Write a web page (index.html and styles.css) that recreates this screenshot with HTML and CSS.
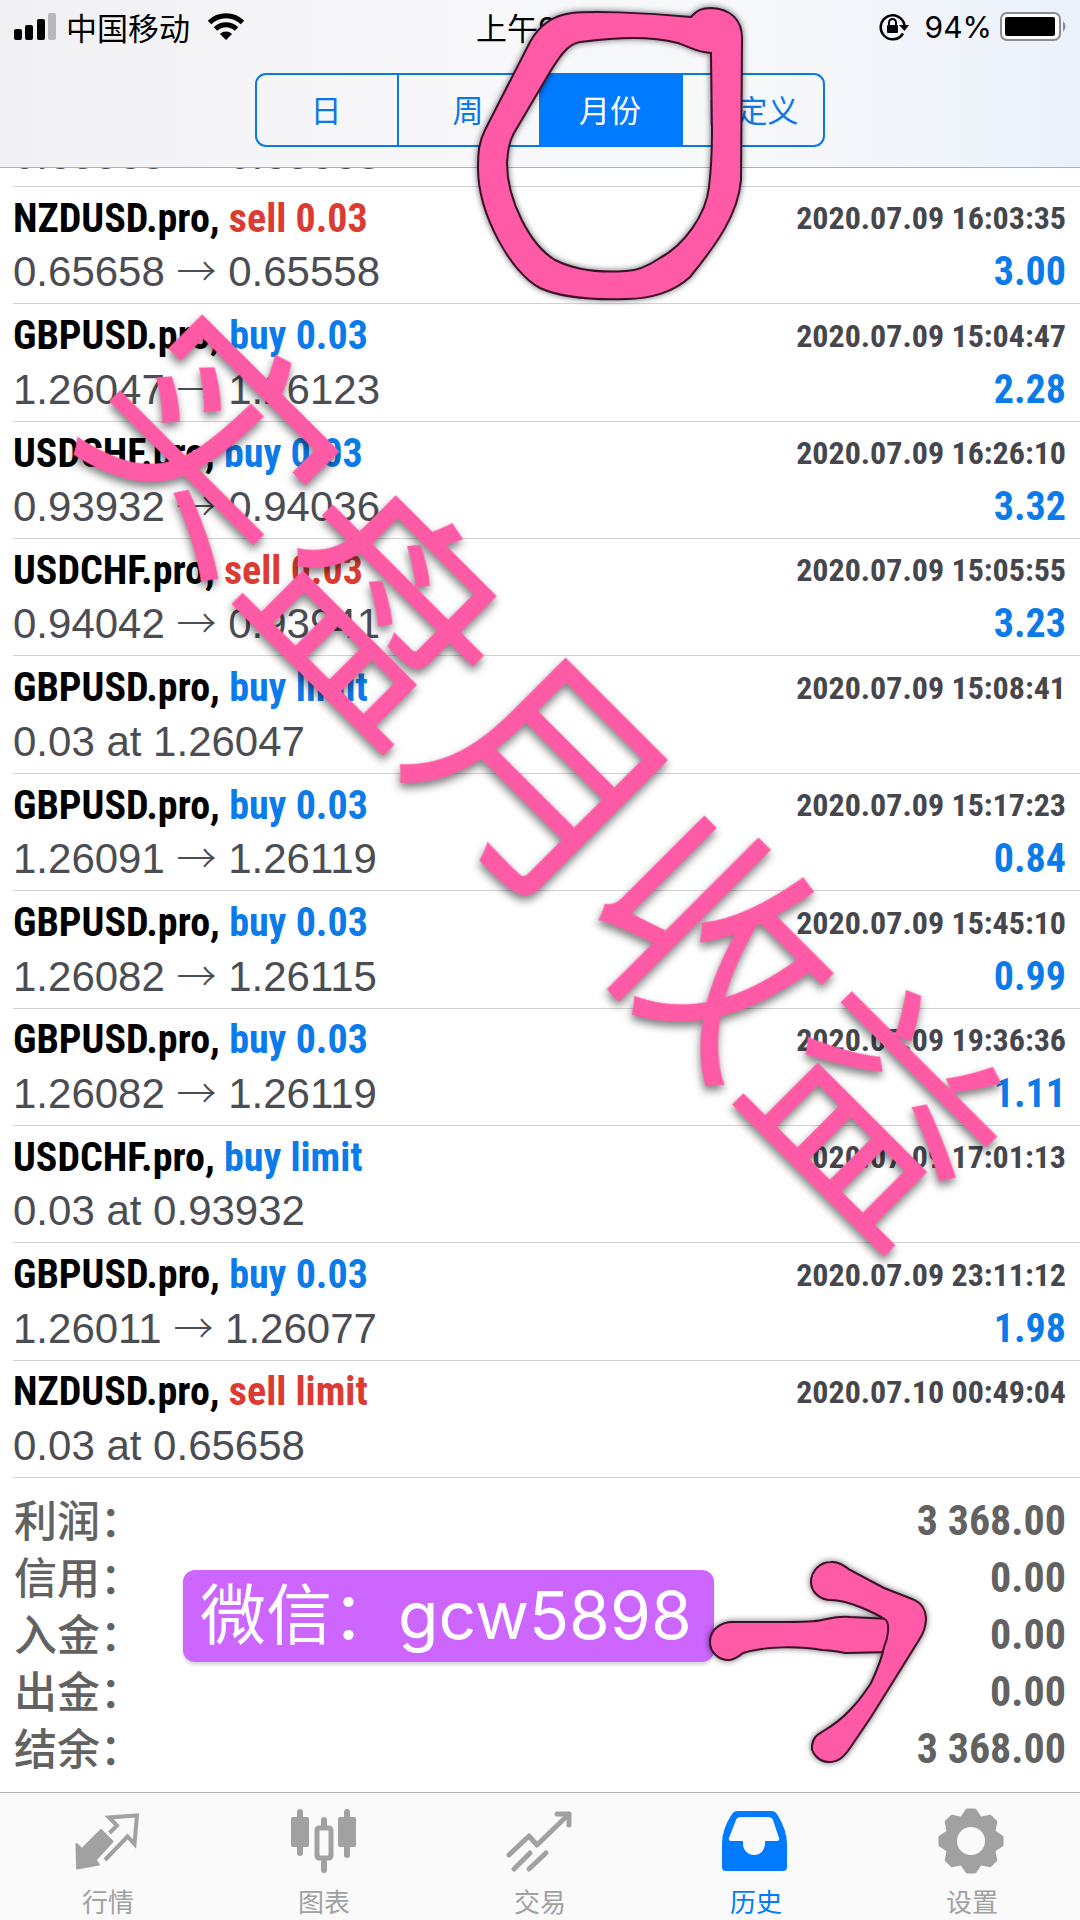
FILE: index.html
```
<!DOCTYPE html>
<html lang="zh-CN">
<head>
    <meta charset="utf-8">
    <meta name="viewport" content="width=device-width, initial-scale=1">
    <title>历史</title>
    <link rel="stylesheet" href="styles.css">
</head>
<body>
    <div class="app">
        <header class="header">
            <div class="status-bar">
                <div class="status-left">
                    <svg class="signal" width="42" height="28" viewBox="0 0 42 28">
                        <rect x="0" y="16" width="8" height="11" rx="2"/>
                        <rect x="11" y="12" width="8" height="15" rx="2"/>
                        <rect x="23" y="6" width="8" height="21" rx="2"/>
                        <rect x="34" y="0" width="8" height="27" rx="2" fill="#b9b9bb"/>
                    </svg>
                    <span>中国移动</span>
                    <svg class="wifi" width="36" height="27" viewBox="0 0 36 27">
                        <path d="M1.500 9.500a23.500 23.500 0 0 1 33 0M7.500 16a15 15 0 0 1 21 0" fill="none" stroke="#000" stroke-width="5"/>
                        <path d="M18 27l-6-6a8.500 8.500 0 0 1 12 0z"/>
                    </svg>
                </div>
                <div class="status-time">上午9:53</div>
                <div class="status-right">
                    <svg width="30" height="28" viewBox="0 0 30 28">
                        <path d="M24 20.500A12 12 0 1 1 25.500 12" fill="none" stroke="#000" stroke-width="2.500"/>
                        <path d="M20 12h10l-4.500 6z"/>
                        <rect x="8" y="12" width="11" height="8" rx="1"/>
                        <path d="M10 13V9.500a3.500 3.500 0 0 1 7 0V13" fill="none" stroke="#000" stroke-width="2"/>
                    </svg>
                    <span class="percent">94%</span>
                    <svg width="66" height="30" viewBox="0 0 66 30">
                        <rect x="1" y="1" width="59" height="27" rx="6" fill="#fff" stroke="#8c8c90" stroke-width="2"/>
                        <rect x="5" y="5" width="50" height="19" rx="2"/>
                        <path d="M63 9q5 5.500 0 11z" fill="#8c8c90"/>
                    </svg>
                </div>
            </div>
            <div class="segments">
                <button type="button">日</button>
                <button type="button">周</button>
                <button type="button" class="active">月份</button>
                <button type="button">自定义</button>
            </div>
        </header>

        <main class="history">
            <div class="deal clipped">
                <div class="prices"><span>0.65568 <i>→</i> 0.65668</span><b>3.00</b></div>
            </div>
            <div class="deal">
                <div class="title"><span>NZDUSD.pro, <em class="sell">sell 0.03</em></span><time>2020.07.09 16:03:35</time></div>
                <div class="prices"><span>0.65658 <i>→</i> 0.65558</span><b>3.00</b></div>
            </div>
            <div class="deal">
                <div class="title"><span>GBPUSD.pro, <em>buy 0.03</em></span><time>2020.07.09 15:04:47</time></div>
                <div class="prices"><span>1.26047 <i>→</i> 1.26123</span><b>2.28</b></div>
            </div>
            <div class="deal">
                <div class="title"><span>USDCHF.pro, <em>buy 0.03</em></span><time>2020.07.09 16:26:10</time></div>
                <div class="prices"><span>0.93932 <i>→</i> 0.94036</span><b>3.32</b></div>
            </div>
            <div class="deal">
                <div class="title"><span>USDCHF.pro, <em class="sell">sell 0.03</em></span><time>2020.07.09 15:05:55</time></div>
                <div class="prices"><span>0.94042 <i>→</i> 0.93941</span><b>3.23</b></div>
            </div>
            <div class="deal">
                <div class="title"><span>GBPUSD.pro, <em>buy limit</em></span><time>2020.07.09 15:08:41</time></div>
                <div class="prices"><span>0.03 at 1.26047</span></div>
            </div>
            <div class="deal">
                <div class="title"><span>GBPUSD.pro, <em>buy 0.03</em></span><time>2020.07.09 15:17:23</time></div>
                <div class="prices"><span>1.26091 <i>→</i> 1.26119</span><b>0.84</b></div>
            </div>
            <div class="deal">
                <div class="title"><span>GBPUSD.pro, <em>buy 0.03</em></span><time>2020.07.09 15:45:10</time></div>
                <div class="prices"><span>1.26082 <i>→</i> 1.26115</span><b>0.99</b></div>
            </div>
            <div class="deal">
                <div class="title"><span>GBPUSD.pro, <em>buy 0.03</em></span><time>2020.07.09 19:36:36</time></div>
                <div class="prices"><span>1.26082 <i>→</i> 1.26119</span><b>1.11</b></div>
            </div>
            <div class="deal">
                <div class="title"><span>USDCHF.pro, <em>buy limit</em></span><time>2020.07.09 17:01:13</time></div>
                <div class="prices"><span>0.03 at 0.93932</span></div>
            </div>
            <div class="deal">
                <div class="title"><span>GBPUSD.pro, <em>buy 0.03</em></span><time>2020.07.09 23:11:12</time></div>
                <div class="prices"><span>1.26011 <i>→</i> 1.26077</span><b>1.98</b></div>
            </div>
            <div class="deal">
                <div class="title"><span>NZDUSD.pro, <em class="sell">sell limit</em></span><time>2020.07.10 00:49:04</time></div>
                <div class="prices"><span>0.03 at 0.65658</span></div>
            </div>
        </main>

        <section class="summary">
            <dl>
                <div><dt>利润：</dt><dd>3 368.00</dd></div>
                <div><dt>信用：</dt><dd>0.00</dd></div>
                <div><dt>入金：</dt><dd>0.00</dd></div>
                <div><dt>出金：</dt><dd>0.00</dd></div>
                <div><dt>结余：</dt><dd>3 368.00</dd></div>
            </dl>
            <div class="contact">微信：gcw5898</div>
        </section>

        <nav class="tabs">
            <a href="#quotes">
                <svg width="72" height="72" viewBox="0 0 72 72">
                    <path d="M29 27L40.500 38.500 23.500 57 27 61.500 5 65.500 4.500 41 10 46z" stroke-width="2" stroke="currentColor" stroke-linejoin="round"/>
                    <path d="M37.500 30L45 22.500 37 14.500 65 12.500 62.500 41 55.500 33.500 33 57" fill="none" stroke="currentColor" stroke-width="4"/>
                </svg>
                <span>行情</span>
            </a>
            <a href="#chart">
                <svg width="72" height="72" viewBox="0 0 72 72">
                    <rect x="3" y="14" width="18" height="30" rx="2"/>
                    <rect x="9" y="6" width="6" height="47" rx="3"/>
                    <rect x="50" y="14" width="18" height="30" rx="2"/>
                    <rect x="56" y="6" width="6" height="49" rx="3"/>
                    <rect x="29" y="25" width="14" height="30" rx="2" fill="none" stroke="currentColor" stroke-width="5"/>
                    <rect x="33" y="14" width="6" height="12" rx="3"/>
                    <rect x="33" y="56" width="6" height="14" rx="3"/>
                </svg>
                <span>图表</span>
            </a>
            <a href="#trade">
                <svg class="lines" width="72" height="72" viewBox="0 0 72 72">
                    <path d="M5 52L25 33 33 42 65 11M53 11H65V22"/>
                    <path d="M10 66L26 50M25 66L42 50"/>
                </svg>
                <span>交易</span>
            </a>
            <a href="#history" class="active">
                <svg width="72" height="72" viewBox="0 0 72 72">
                    <path fill-rule="evenodd" d="M17 8H52Q55 8 57 11Q67 27 67 41V64Q67 68 63 68H6Q2 68 2 64V41Q2 26 12 11Q14 8 17 8zM21 14Q17 14 16 17L9 35Q8 38 11 38H23V41A11 11 0 0 0 45 41V38H57Q60 38 59 35L53 17Q52 14 48 14z"/>
                </svg>
                <span>历史</span>
            </a>
            <a href="#settings">
                <svg width="72" height="72" viewBox="0 0 72 72">
                    <defs>
                        <path id="tooth" d="M-10-22L-4-31H4L10-22z" stroke="currentColor" stroke-width="3" stroke-linejoin="round"/>
                    </defs>
                    <g transform="translate(35 38)">
                        <circle r="20" fill="none" stroke="currentColor" stroke-width="12"/>
                        <use href="#tooth"/>
                        <use href="#tooth" transform="rotate(45)"/>
                        <use href="#tooth" transform="rotate(90)"/>
                        <use href="#tooth" transform="rotate(135)"/>
                        <use href="#tooth" transform="rotate(180)"/>
                        <use href="#tooth" transform="rotate(225)"/>
                        <use href="#tooth" transform="rotate(270)"/>
                        <use href="#tooth" transform="rotate(315)"/>
                    </g>
                </svg>
                <span>设置</span>
            </a>
        </nav>

        <!-- marker notes drawn over the screen -->
        <svg class="notes" viewBox="0 0 1080 1920">
            <text class="watermark" transform="translate(545 776) rotate(45)" text-anchor="middle" y="88">实盘月收益</text>
            <g class="marker">
                <path fill-rule="evenodd" d="M572 13C590 11 640 12 691 17C697 10 702 8 711 8C731 9 742 20 742 38L741 180C738 215 716 245 690 277C674 292 650 299 626 299C594 300 562 298 540 288C512 274 478 215 478 168C478 152 479 142 485 130L530 42C540 24 555 15 572 13zM547 77C560 55 568 44 580 42C620 37 650 36 678 43C690 47 695 52 711 53L712 133C712 150 711 170 709 187C706 215 684 245 660 258C645 268 635 271 626 271C600 273 575 270 555 260C530 245 507 200 507 163C508 150 509 142 514 133z"/>
                <path d="M733 1622H781C800 1622 815 1622 822 1620C832 1618 838 1616 850 1617L890 1619V1652L846 1653C835 1651 830 1650 822 1650C800 1646 765 1646 743 1653C738 1657 733 1660 729 1660C718 1660 710 1652 710 1642C710 1630 720 1622 733 1622z"/>
                <path d="M831 1562C838 1561 845 1566 850 1570L884 1588L912 1599C921 1602 926 1610 926 1620C925 1628 924 1632 919 1640L871 1717L850 1748C843 1758 838 1762 829 1762C818 1762 811 1752 812 1746C813 1737 817 1735 822 1732C832 1726 842 1719 850 1710C860 1700 865 1692 871 1683C878 1668 882 1658 884 1647C888 1638 890 1625 886 1620C880 1616 870 1611 860 1607C850 1603 840 1600 831 1600C820 1600 811 1592 811 1582C811 1571 820 1562 831 1562z"/>
            </g>
        </svg>
    </div>
</body>
</html>
```

FILE: styles.css
```
* {
    box-sizing: border-box;
}
body {
    margin: 0;
    background: #fff;
    font-family: "Liberation Sans", "Noto Sans CJK SC", sans-serif;
}
.app {
    position: relative;
    display: flex;
    flex-direction: column;
    min-height: 100vh;
    overflow: hidden;
}

/* header */
.header {
    padding: 4px 14px 20px;
    background: linear-gradient(90deg, #f1f1f3, #f8f8fa 45%, #f7f8fa 70%, #ebf1fb);
    border-bottom: 1px solid #b0b0b4;
}
.status-bar {
    display: grid;
    grid-template-columns: 1fr auto 1fr;
    align-items: center;
    height: 40px;
    font-family: Inter, "Noto Sans CJK SC", sans-serif;
    font-size: 31px;
}
.status-left,
.status-right {
    display: flex;
    align-items: center;
}
.status-left {
    gap: 10px;
}
.wifi {
    margin-left: 8px;
}
.status-right {
    justify-content: flex-end;
    gap: 8px;
}
.percent {
    margin-left: 8px;
    font-size: 30px;
}
.segments {
    display: flex;
    width: 570px;
    margin: 29px auto 0;
    border: 2px solid #0b78e8;
    border-radius: 11px;
    overflow: hidden;
}
.segments button {
    flex: 1;
    height: 70px;
    padding: 0 2px 4px 0;
    border: 0;
    border-left: 2px solid #0b78e8;
    background: none;
    color: #0b78e8;
    font-family: "Noto Sans CJK SC", sans-serif;
    font-size: 31px;
}
.segments button:first-child {
    border-left: 0;
}
.segments .active {
    background: #007aff;
    color: #fff;
}

/* deals */
.history {
    flex: 1;
    display: flex;
    flex-direction: column;
    padding-left: 13px;
}
.deal {
    flex: 1;
    display: flex;
    flex-direction: column;
    justify-content: flex-end;
    padding: 0 14px 7px 0;
    border-bottom: 1px solid #d2d2d4;
}
.deal.clipped {
    flex: 0 0 19px;
    overflow: hidden;
}
.title,
.prices {
    display: flex;
    justify-content: space-between;
    align-items: center;
    white-space: nowrap;
}
.title {
    height: 60px;
    font-family: "Roboto Condensed", Roboto, sans-serif;
    font-size: 40px;
    font-weight: bold;
}
.title em {
    color: #0b7bea;
    font-style: normal;
}
.title .sell {
    color: #db3b30;
}
.title time {
    color: #46474c;
    font-size: 32px;
}
.prices {
    flex: none;
    height: 48px;
    line-height: 48px;
    color: #4c4d53;
    font-size: 42px;
}
.prices i {
    font-family: "Noto Sans CJK SC", sans-serif;
    font-size: 40px;
    font-style: normal;
    font-weight: 300;
    line-height: 1;
}
.prices b {
    color: #0b7bea;
    font-family: "Roboto Condensed", Roboto, sans-serif;
    font-size: 40px;
}

/* totals */
.summary {
    position: relative;
    padding: 14px 14px 15px;
    color: #626262;
}
.summary dl {
    margin: 0;
}
.summary dl div {
    display: flex;
    justify-content: space-between;
    height: 57px;
}
.summary dt {
    font-family: "Noto Sans CJK SC", sans-serif;
    font-size: 43px;
    font-weight: 500;
    line-height: 52px;
}
.summary dd {
    margin: 0;
    font-family: "Roboto Condensed", Roboto, sans-serif;
    font-size: 42px;
    font-weight: bold;
    line-height: 57px;
}
.contact {
    position: absolute;
    top: 92px;
    left: 183px;
    width: 531px;
    height: 92px;
    padding-left: 17px;
    border-radius: 12px;
    background: #cc66ff;
    box-shadow: 0 3px 3px rgba(0, 0, 0, 0.15);
    color: #fff;
    font-family: Inter, "Noto Sans CJK SC", sans-serif;
    font-size: 66px;
    line-height: 90px;
    white-space: nowrap;
}

/* tab bar */
.tabs {
    display: flex;
    padding: 10px 0 1px;
    border-top: 1px solid #b2b2b2;
    background: #fafafa;
}
.tabs a {
    flex: 1;
    display: flex;
    flex-direction: column;
    align-items: center;
    gap: 8px;
    color: #a1a1a1;
    font-family: "Noto Sans CJK SC", sans-serif;
    font-size: 26px;
    line-height: 36px;
    text-decoration: none;
}
.tabs svg {
    fill: currentColor;
}
.tabs .lines {
    fill: none;
    stroke: currentColor;
    stroke-width: 5;
    stroke-linecap: round;
    stroke-linejoin: round;
}
.tabs .active {
    color: #007aff;
}

/* marker notes */
.notes {
    position: absolute;
    top: 0;
    left: 0;
    width: 100%;
    pointer-events: none;
}
.watermark {
    fill: #ff5aa5;
    font-family: "Noto Sans CJK SC", sans-serif;
    font-size: 236px;
    filter: drop-shadow(3px 4px 4px rgba(0, 0, 0, 0.5));
}
.marker {
    fill: #ff5aa5;
    stroke: #3a1028;
    stroke-width: 2;
    filter: drop-shadow(0 0 3px rgba(0, 0, 0, 0.6));
}
```
